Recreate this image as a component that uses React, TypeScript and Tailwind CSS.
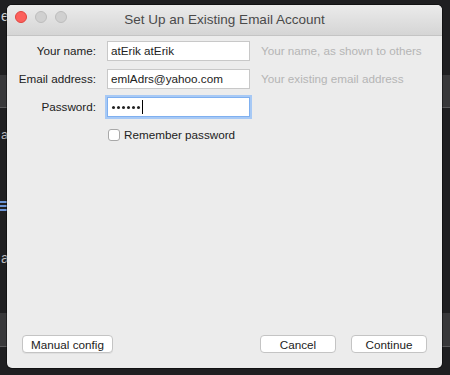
import React from 'react';

const rows = [
  { label: 'Your name:', value: 'atErik atErik', hint: 'Your name, as shown to others' },
  { label: 'Email address:', value: 'emlAdrs@yahoo.com', hint: 'Your existing email address' },
];

const Light = ({ color }: { color: string }) => (
  <span className={`h-3 w-3 rounded-full ${color}`} />
);

const App = () => {
  return (
    <div
      className="relative h-[375px] w-[450px] overflow-hidden bg-[#1f1f21] text-[11.7px] text-[#222]"
      style={{ fontFamily: '"Liberation Sans", Arial, sans-serif' }}
    >
      {/* app behind the dialog */}
      <div className="absolute left-0 top-[75px] h-[33px] w-full border-b border-[#5a5a5c] bg-[#38383a]" />
      <div className="absolute left-0 top-[313px] h-[34px] w-full border-b border-[#5a5a5c] bg-[#38383a]" />
      <div className="absolute left-[1px] top-[9px] text-[14px] leading-none text-[#d0d0d0]">e</div>
      <div className="absolute left-[1px] top-[128px] text-[13px] leading-none text-[#bbb]">a</div>
      <div className="absolute left-0 top-[201px] flex w-[7px] flex-col gap-[2px]">
        <span className="h-[2px] w-full bg-[#6b94d6]" />
        <span className="h-[2px] w-full bg-[#6b94d6]" />
        <span className="h-[2px] w-full bg-[#6b94d6]" />
      </div>
      <div className="absolute left-[1px] top-[251px] text-[14px] leading-none text-[#bbb]">a</div>

      {/* dialog window */}
      <div className="absolute left-[7px] top-[5px] flex h-[363px] w-[435px] flex-col overflow-hidden rounded-[5px] bg-[#ececec] shadow-[0_0_0_1px_rgba(0,0,0,0.4)]">
        <div className="relative flex h-[31px] shrink-0 items-center justify-center border-b border-[#c4c4c4] bg-gradient-to-b from-[#ebebeb] to-[#d5d5d5]">
          <div className="absolute left-[8px] top-[6px] flex gap-[8px]">
            <Light color="bg-[#fc605c] border border-[#e0443e]" />
            <Light color="bg-[#d0d0d0] border border-[#bdbdbd]" />
            <Light color="bg-[#d0d0d0] border border-[#bdbdbd]" />
          </div>
          <span className="text-[13.5px] text-[#4a4a4a]">Set Up an Existing Email Account</span>
        </div>

        <div className="flex flex-1 flex-col px-[15px] pb-[15px] pt-[5px]">
          <div className="flex flex-col gap-[8px]">
            {rows.map(row => (
              <div key={row.label} className="flex h-[20px] items-center">
                <span className="flex w-[74px] justify-end whitespace-nowrap">{row.label}</span>
                <div className="ml-[11px] flex h-[20px] w-[143px] items-center border border-[#c8c8c8] bg-white px-[3px]">
                  {row.value}
                </div>
                <span className="ml-[11px] whitespace-nowrap text-[#b5b5b5]">{row.hint}</span>
              </div>
            ))}
            <div className="flex h-[20px] items-center">
              <span className="flex w-[74px] justify-end whitespace-nowrap">Password:</span>
              <div className="ml-[11px] flex h-[20px] w-[143px] items-center border border-[#7fb0f0] bg-white px-[4px] shadow-[0_0_0_2px_#a7c9f5]">
                <div className="flex gap-[2px]">
                  {[0, 1, 2, 3, 4, 5].map(i => (
                    <span key={i} className="h-[3px] w-[3px] rounded-full bg-[#222]" />
                  ))}
                </div>
                <span className="ml-[2px] h-[14px] w-px bg-black" />
              </div>
            </div>
          </div>
          <label className="ml-[86px] mt-[9px] flex items-center gap-[4px]">
            <span className="h-[12px] w-[12px] rounded-[3px] border border-[#a8a8a8] bg-white" />
            <span>Remember password</span>
          </label>

          <div className="flex-1" />

          <div className="flex items-center">
            <button className="h-[18px] w-[91px] rounded-[4px] border border-[#c4c4c4] bg-white shadow-[0_1px_0_rgba(0,0,0,0.05)]">
              Manual config
            </button>
            <div className="flex-1" />
            <button className="h-[18px] w-[76px] rounded-[4px] border border-[#c4c4c4] bg-white">
              Cancel
            </button>
            <button className="ml-[15px] h-[18px] w-[76px] rounded-[4px] border border-[#c4c4c4] bg-white">
              Continue
            </button>
          </div>
        </div>
      </div>
    </div>
  );
};

export default App;
